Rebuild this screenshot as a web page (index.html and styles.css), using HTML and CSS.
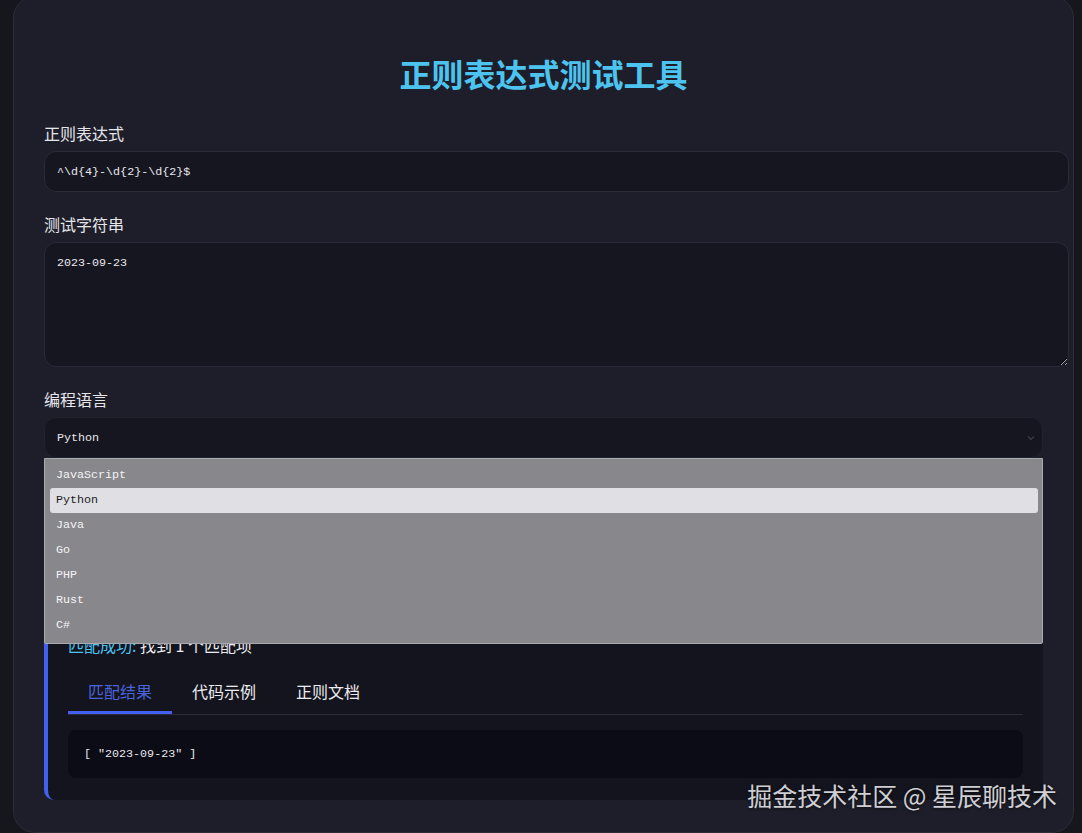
FILE: index.html
```html
<!DOCTYPE html>
<html lang="zh-CN">

<head>
    <meta charset="UTF-8">
    <meta name="viewport" content="width=device-width, initial-scale=1.0">
    <title>正则表达式测试工具</title>
    <link rel="stylesheet" href="styles.css">
</head>

<body>
    <div class="container">
        <h1 class="title">正则表达式测试工具</h1>

        <div class="form-group">
            <label for="regex">正则表达式</label>
            <input id="regex" class="text-input" type="text" value="^\d{4}-\d{2}-\d{2}$">
        </div>

        <div class="form-group">
            <label for="test-string">测试字符串</label>
            <textarea id="test-string" class="text-area">2023-09-23</textarea>
        </div>

        <div class="form-group">
            <label for="language">编程语言</label>
            <div class="select-wrap">
                <select id="language" class="lang-select">
                    <option>JavaScript</option>
                    <option selected>Python</option>
                    <option>Java</option>
                    <option>Go</option>
                    <option>PHP</option>
                    <option>Rust</option>
                    <option>C#</option>
                </select>
                <svg class="select-arrow" width="10" height="10" viewBox="0 0 10 10">
                    <path d="M2 3.5 L5 6.5 L8 3.5" fill="none" stroke="#3b3b48" stroke-width="1.4" />
                </svg>
                <!-- open option list -->
                <ul class="dropdown">
                    <li>JavaScript</li>
                    <li class="active">Python</li>
                    <li>Java</li>
                    <li>Go</li>
                    <li>PHP</li>
                    <li>Rust</li>
                    <li>C#</li>
                </ul>
            </div>
        </div>

        <div class="result">
            <p class="result-title"><span class="ok">匹配成功:</span> 找到 1 个匹配项</p>
            <div class="tabs">
                <div class="tab active">匹配结果</div>
                <div class="tab">代码示例</div>
                <div class="tab">正则文档</div>
            </div>
            <pre class="code-box">[ "2023-09-23" ]</pre>
        </div>
    </div>

    <div class="watermark">掘金技术社区 @ 星辰聊技术</div>
</body>

</html>
```

FILE: styles.css
```css
* {
    box-sizing: border-box;
}

body {
    margin: 0;
    padding: 0 8px 0 13px;
    background-color: #16161d;
    color: #e6e6ea;
    font-family: "Noto Sans CJK SC", "Noto Sans", sans-serif;
    overflow: hidden;
}

.container {
    margin-top: -4px;
    background-color: #1e1e2a;
    border: 1px solid #2d2d3a;
    border-radius: 22px;
    padding: 30px 30px 32px;
}

.title {
    margin: 24px 0 28px;
    text-align: center;
    font-size: 32px;
    line-height: 44px;
    font-weight: 700;
    color: #4cc4ef;
}

.form-group {
    margin-bottom: 22px;
}

.form-group > label {
    display: block;
    font-size: 16px;
    line-height: 20px;
    margin-bottom: 8px;
    color: #e6e6ea;
}

.text-input,
.text-area {
    /* content-box: width 100% plus padding runs past the column */
    box-sizing: content-box;
    width: 100%;
    padding: 0 12px;
    background-color: #161620;
    border: 1px solid #2a2a38;
    border-radius: 12px;
    color: #e8e8ec;
    font-family: "Liberation Mono", monospace;
    font-size: 11.7px;
    display: block;
    margin: 0;
}

.text-input {
    height: 39px;
}

.text-area {
    height: 111px;
    padding-top: 12px;
    padding-bottom: 0;
    resize: vertical;
    line-height: 16px;
}

.select-wrap {
    position: relative;
}

.lang-select {
    width: 100%;
    height: 41px;
    padding: 0 12px;
    appearance: none;
    -webkit-appearance: none;
    background-color: #161620;
    border: 1px solid #22222e;
    border-radius: 12px;
    color: #e8e8ec;
    font-family: "Liberation Mono", monospace;
    font-size: 11.7px;
    display: block;
}

.select-arrow {
    position: absolute;
    right: 7px;
    top: 16px;
}

.dropdown {
    position: absolute;
    top: 100%;
    left: 0;
    right: 0;
    z-index: 10;
    margin: 0;
    padding: 4px 4px 5px 5px;
    list-style: none;
    background-color: #88878c;
    border: 1px solid #a9a9b0;
    border-radius: 0 0 2px 2px;
}

.dropdown li {
    height: 25px;
    line-height: 25px;
    padding: 0 6px;
    color: #f4f4f6;
    font-family: "Liberation Mono", monospace;
    font-size: 11.7px;
    border-radius: 3px;
}

.dropdown li.active {
    background-color: #e0dfe4;
    color: #1c1c22;
}

/* sits below the option list, the space above holds nothing while it is open */
.result {
    margin-top: 156px;
    background-color: #14141e;
    border-left: 4px solid #4361ee;
    border-radius: 10px;
    padding: 20px 20px 22px;
}

.result-title {
    margin: 0 0 14px;
    font-size: 16px;
    line-height: 22px;
    color: #ececf0;
}

.result-title .ok {
    color: #4cc4ef;
}

.tabs {
    display: flex;
    border-bottom: 1px solid #2c2c3a;
    margin-bottom: 15px;
}

.tab {
    padding: 10px 20px 9px;
    font-size: 16px;
    line-height: 22px;
    color: #ececf0;
    border-bottom: 3px solid transparent;
}

.tab.active {
    color: #4a63dc;
    border-bottom-color: #4361ee;
}

.code-box {
    margin: 0;
    height: 48px;
    padding: 0 16px;
    line-height: 48px;
    background-color: #0c0c16;
    border-radius: 8px;
    color: #e8e8ec;
    font-family: "Liberation Mono", monospace;
    font-size: 11.7px;
}

.watermark {
    position: absolute;
    right: 25px;
    top: 778px;
    font-size: 25px;
    line-height: 34px;
    color: rgba(235, 235, 240, 0.88);
    text-shadow: 0 1px 3px rgba(0, 0, 0, 0.6);
}
```
